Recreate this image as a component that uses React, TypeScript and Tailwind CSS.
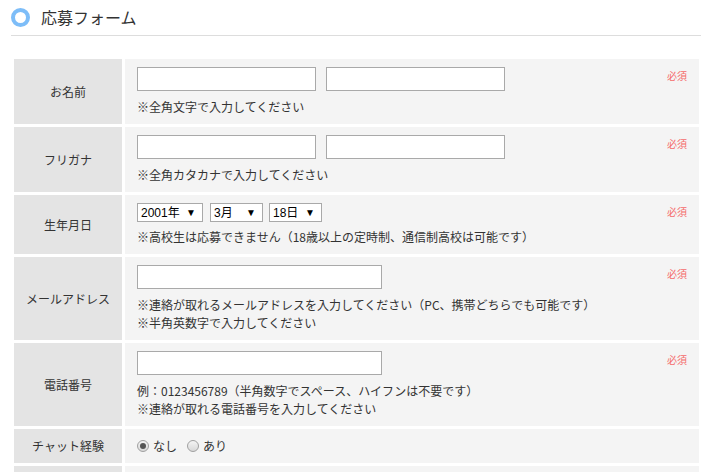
const font = {
  fontFamily: '"Noto Sans CJK JP", "Noto Sans", sans-serif',
};

function Required() {
  return (
    <span className="absolute right-[12px] top-[10px] text-[10px] leading-[14px] text-[#f56b6b]">
      必須
    </span>
  );
}

function Label({ children }: { children: React.ReactNode }) {
  return (
    <div className="flex items-center justify-center bg-[#e4e4e4] text-[12px] text-[#333]">
      {children}
    </div>
  );
}

function Cell({
  children,
  required,
}: {
  children: React.ReactNode;
  required?: boolean;
}) {
  return (
    <div className="relative bg-[#f4f4f4] px-[12px] pt-[8px] pb-[8px] text-[12px] leading-[18px] text-[#333]">
      {children}
      {required && <Required />}
    </div>
  );
}

function TextBox({ w }: { w: string }) {
  return (
    <input
      type="text"
      className={`${w} h-[24px] border border-[#a9a9a9] bg-white outline-none`}
    />
  );
}

function SelectBox({ label, w }: { label: string; w: string }) {
  return (
    <div
      className={`${w} flex h-[19px] items-center justify-between border border-[#a9a9a9] bg-white pl-[3px] pr-[6px] text-[12px] text-black`}
      style={{ fontFamily: '"Liberation Sans", "Noto Sans CJK JP", sans-serif' }}
    >
      <span>{label}</span>
      <span className="text-[10px]">▼</span>
    </div>
  );
}

function Radio({ checked }: { checked?: boolean }) {
  return (
    <span className="flex h-[12px] w-[12px] items-center justify-center rounded-full border border-[#a0a0a0] bg-gradient-to-b from-[#f4f4f4] to-[#d8d8d8]">
      {checked && <span className="h-[6px] w-[6px] rounded-full bg-[#555]" />}
    </span>
  );
}

export default function App() {
  return (
    <div className="h-[472px] w-[708px] overflow-hidden bg-white" style={font}>
      {/* heading */}
      <div className="mx-[11px] mr-[7px] flex h-[36px] items-start border-b border-[#dddddd] pt-[8px]">
        <span className="h-[19px] w-[19px] rounded-full border-[4px] border-[#7dbdf8]" />
        <h2 className="ml-[11px] -mt-[1px] text-[16px] leading-[20px] text-[#333]">
          応募フォーム
        </h2>
      </div>

      <div className="ml-[14px] mr-[9px] mt-[23px] grid grid-cols-[108px_1fr] gap-[3px]">
        <Label>お名前</Label>
        <Cell required>
          <div className="flex gap-[10px]">
            <TextBox w="w-[179px]" />
            <TextBox w="w-[179px]" />
          </div>
          <p className="mt-[7px]">※全角文字で入力してください</p>
        </Cell>

        <Label>フリガナ</Label>
        <Cell required>
          <div className="flex gap-[10px]">
            <TextBox w="w-[179px]" />
            <TextBox w="w-[179px]" />
          </div>
          <p className="mt-[7px]">※全角カタカナで入力してください</p>
        </Cell>

        <Label>生年月日</Label>
        <Cell required>
          <div className="flex">
            <SelectBox label="2001年" w="w-[66px]" />
            <div className="ml-[7px]">
              <SelectBox label="3月" w="w-[53px]" />
            </div>
            <div className="ml-[6px]">
              <SelectBox label="18日" w="w-[53px]" />
            </div>
          </div>
          <p className="mt-[6px]">
            ※高校生は応募できません（18歳以上の定時制、通信制高校は可能です）
          </p>
        </Cell>

        <Label>メールアドレス</Label>
        <Cell required>
          <TextBox w="w-[245px]" />
          <p className="mt-[7px]">
            ※連絡が取れるメールアドレスを入力してください（PC、携帯どちらでも可能です）
          </p>
          <p>※半角英数字で入力してください</p>
        </Cell>

        <Label>電話番号</Label>
        <Cell required>
          <TextBox w="w-[245px]" />
          <p className="mt-[7px]">
            例：0123456789（半角数字でスペース、ハイフンは不要です）
          </p>
          <p>※連絡が取れる電話番号を入力してください</p>
        </Cell>

        <Label>チャット経験</Label>
        <Cell>
          <div className="flex items-center">
            <Radio checked />
            <span className="ml-[4px]">なし</span>
            <span className="ml-[10px]">
              <Radio />
            </span>
            <span className="ml-[4px]">あり</span>
          </div>
        </Cell>

        <Label>&nbsp;</Label>
        <Cell>&nbsp;</Cell>
      </div>
    </div>
  );
}
